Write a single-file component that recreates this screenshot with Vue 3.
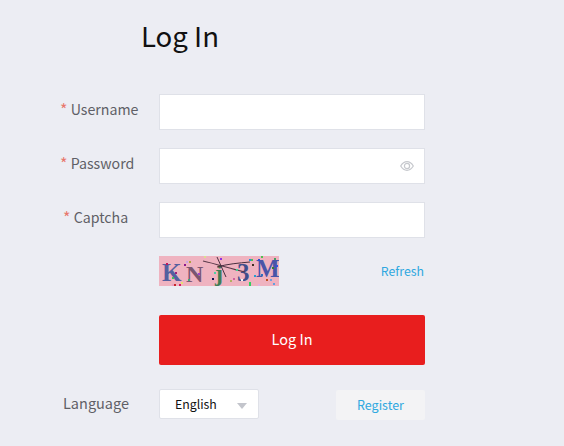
<script setup>
const specks = [
  [7,7,'#c2185b'],[27,5,'#c8a8e0'],[30,5,'#b0a040'],[25,8,'#8e1a8e'],[16,16,'#a0207c'],[13,21,'#3fc45a'],[29,23,'#40a878'],[39,17,'#a040c8'],
  [45,0,'#d8e090'],[61,2,'#9030e0'],[55,16,'#50d0a0'],[53,22,'#101050'],[71,24,'#b0b060'],[74,22,'#d060a0'],[77,13,'#40d090'],[82,23,'#f4f4f4'],
  [90,3,'#2090e0'],[92,3,'#50c050'],[93,8,'#403020'],[99,3,'#3050d0'],[102,0,'#50c050'],[115,2,'#40a060'],[117,9,'#3050e0'],[113,11,'#308030'],
  [95,19,'#20a0d0'],[102,18,'#3070c0'],[90,26,'#30d060'],[90,28,'#30d060'],[99,28,'#e0b0e0'],[107,23,'#c05020'],[111,23,'#70a0e0'],[114,27,'#60a0e0'],
  [13,28,'#e8a0c0'],[15,28,'#c62828'],[20,28,'#d81b60'],[22,26,'#e8e070']
]
</script>

<template>
  <main class="page">
    <h1 class="title">Log In</h1>
    <form class="form" @submit.prevent>
      <div class="row">
        <label class="label label-username"><span class="star">*</span> Username</label>
        <div class="field"></div>
      </div>
      <div class="row">
        <label class="label label-password"><span class="star">*</span> Password</label>
        <div class="field">
          <svg class="eye" width="14" height="10" viewBox="0 0 14 10" fill="none" stroke="#c6c8cd" stroke-width="1.2">
            <path d="M.7 5C2.500 2 4.500.7 7 .7S11.500 2 13.300 5C11.500 8 9.500 9.300 7 9.300S2.500 8 .7 5Z" />
            <circle cx="7" cy="5" r="2.600" />
          </svg>
        </div>
      </div>
      <div class="row">
        <label class="label label-captcha"><span class="star">*</span> Captcha</label>
        <div class="field"></div>
      </div>
      <div class="captcha-row">
        <svg class="captcha" width="120" height="30" viewBox="0 0 120 30">
          <rect width="120" height="30" fill="#efb3c0" />
          <text x="3" y="25" class="cap" font-size="25" fill="#55609f">K</text>
          <text x="27" y="26" class="cap" font-size="24" fill="#7a5570">N</text>
          <text x="56" y="25" class="cap" font-size="24" fill="#3f7d55">j</text>
          <text x="78" y="25" class="cap" font-size="25" fill="#3f4e8c">3</text>
          <text x="97" y="21" class="cap" font-size="25" fill="#4a55a8">M</text>
          <path d="M44 5C58 8 72 13 86 16" stroke="#5a3a4a" stroke-width="1.200" fill="none" />
          <path d="M58 1L67 21" stroke="#4a3040" stroke-width="1" fill="none" />
          <path d="M58 11C68 8 80 7 91 6" stroke="#4a3040" stroke-width="1" fill="none" />
          <rect v-for="(s, i) in specks" :key="i" :x="s[0]" :y="s[1]" width="2" height="2" :fill="s[2]" />
        </svg>
        <a class="refresh">Refresh</a>
      </div>
      <button class="submit" type="button">Log In</button>
      <div class="bottom">
        <span class="label label-language">Language</span>
        <div class="select">
          <span class="select-text">English</span>
          <i class="caret"></i>
        </div>
        <button class="register" type="button">Register</button>
      </div>
    </form>
  </main>
</template>

<style scoped>
.page {
  box-sizing: border-box;
  width: 564px;
  height: 446px;
  background: #ecedf3;
  padding-top: 17px;
  overflow: hidden;
  font-family: "Noto Sans CJK SC", "Noto Sans", sans-serif;
}
.title {
  margin: 0 0 0 141px;
  font-size: 27.600px;
  line-height: 36px;
  font-weight: 400;
  color: #111;
}
.form {
  margin-top: 41px;
  width: 425px;
}
.row {
  display: flex;
  align-items: flex-start;
  height: 36px;
  margin-bottom: 18px;
}
.label {
  font-size: 14.200px;
  line-height: 30px;
  color: #5f5f66;
  white-space: nowrap;
}
.label-username { width: 99px; margin-left: 60px; }
.label-password { width: 99px; margin-left: 60px; }
.label-captcha { width: 96px; margin-left: 63px; }
.label-language { width: 96px; margin-left: 63px; font-size: 14.500px; line-height: 28px; height: 30px; }
.star { color: #e8776c; font-size: 16px; line-height: 1; position: relative; top: 1px; }
.field {
  box-sizing: border-box;
  width: 266px;
  height: 36px;
  background: #fff;
  border: 1px solid #dfe1e8;
  display: flex;
  align-items: center;
  justify-content: flex-end;
  padding-right: 10px;
}
.captcha-row {
  display: flex;
  justify-content: space-between;
  align-items: center;
  margin-left: 159px;
  height: 30px;
}
.captcha { display: block; }
.cap {
  font-family: "Liberation Serif", serif;
  font-weight: 700;
}
.refresh {
  font-size: 12.300px;
  line-height: 28px;
  color: #2fa8e0;
  margin-right: 1px;
}
.submit {
  display: block;
  width: 266px;
  height: 50px;
  margin: 29px 0 24px 159px;
  padding: 0 0 4px;
  border: 0;
  border-radius: 2px;
  background: #e81e1e;
  color: #fff;
  font: 14.500px "Noto Sans CJK SC", "Noto Sans", sans-serif;
}
.bottom {
  display: flex;
  align-items: center;
  height: 30px;
}
.select {
  box-sizing: border-box;
  width: 100px;
  height: 30px;
  background: #fff;
  border: 1px solid #dfe1e8;
  border-radius: 2px;
  display: flex;
  align-items: center;
  justify-content: space-between;
  padding: 0 11px 0 15px;
  font-size: 12.300px;
  color: #111;
}
.caret {
  width: 0;
  height: 0;
  border-left: 5px solid transparent;
  border-right: 5px solid transparent;
  border-top: 6px solid #c3c5cc;
  margin-top: 3px;
}
.register {
  width: 89px;
  height: 30px;
  margin: 1px 0 0 77px;
  padding: 0;
  border: 0;
  border-radius: 2px;
  background: #f3f3f5;
  color: #2fa8e0;
  font: 12.500px "Noto Sans CJK SC", "Noto Sans", sans-serif;
}
</style>
